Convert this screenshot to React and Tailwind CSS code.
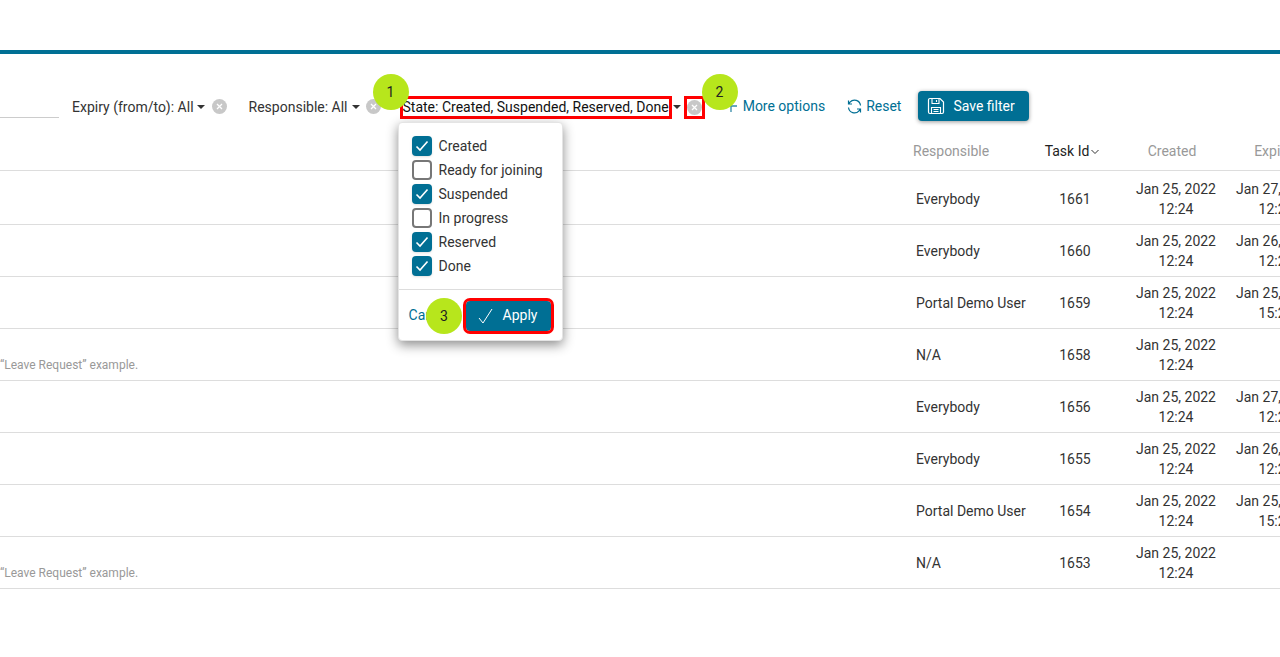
import React from "react";

const rows = [
  { r: "Everybody", id: "1661", e: ["Jan 27, 2022", "12:24"], h: "h-[54px] pt-[3px]" },
  { r: "Everybody", id: "1660", e: ["Jan 26, 2022", "12:24"] },
  { r: "Portal Demo User", id: "1659", e: ["Jan 25, 2022", "15:24"] },
  { r: "N/A", id: "1658", note: true },
  { r: "Everybody", id: "1656", e: ["Jan 27, 2022", "12:24"] },
  { r: "Everybody", id: "1655", e: ["Jan 26, 2022", "12:24"] },
  { r: "Portal Demo User", id: "1654", e: ["Jan 25, 2022", "15:24"] },
  { r: "N/A", id: "1653", note: true },
];

const states = [
  ["Created", true],
  ["Ready for joining", false],
  ["Suspended", true],
  ["In progress", false],
  ["Reserved", true],
  ["Done", true],
];

function Caret() {
  return (
    <svg width="8" height="4" viewBox="0 0 8 4" className="shrink-0">
      <path d="M0 0h8L4 4z" fill="#333" />
    </svg>
  );
}

function Clear() {
  return (
    <svg width="15" height="15" viewBox="0 0 15 15" className="shrink-0">
      <circle cx="7.5" cy="7.5" r="7.5" fill="#c8c8c8" />
      <path d="M5 5l5 5M10 5l-5 5" stroke="#fff" strokeWidth="1.3" />
    </svg>
  );
}

function Badge({ n, className }) {
  return (
    <div className={"absolute z-20 flex h-9 w-9 items-center justify-center rounded-full bg-[#b7e61c] text-sm text-[#222] " + className}>
      {n}
    </div>
  );
}

function Check({ on }) {
  if (on) {
    return (
      <span className="flex h-5 w-5 shrink-0 items-center justify-center rounded-sm bg-[#006f94] shadow-sm">
        <svg width="14" height="12" viewBox="0 0 14 12">
          <path d="M1.5 6.5l3.5 3.5 7.5-8.5" fill="none" stroke="#fff" strokeWidth="1.6" />
        </svg>
      </span>
    );
  }
  return <span className="h-5 w-5 shrink-0 rounded-sm border-2 border-[#777] bg-white" />;
}

export default function App() {
  return (
    <div className="h-[657px] w-[1280px] overflow-hidden bg-white font-['Roboto',sans-serif] text-sm leading-[17px] text-[#333]">
      <div className="mt-[50px] h-[4px] bg-[#006f94]" />

      <div className="flex h-[77px] items-center pt-[29px]">
        <div className="mt-[20px] h-px w-[59px] bg-[#ccc]" />
        <span className="ml-[13px] whitespace-nowrap">Expiry (from/to): All</span>
        <span className="ml-[3px]"><Caret /></span>
        <span className="ml-[7px] -mt-[2px]"><Clear /></span>
        <span className="ml-[22px] whitespace-nowrap">Responsible: All</span>
        <span className="ml-[4px]"><Caret /></span>
        <span className="ml-[6px] -mt-[2px]"><Clear /></span>

        <div className="relative ml-[22px] flex items-center">
          <span className="whitespace-nowrap text-[#111] outline-[3px] outline-[#f00]">State: Created, Suspended, Reserved, Done</span>
          <span className="ml-[4px]"><Caret /></span>
          <span className="ml-[6px] flex h-[17px] w-[15px] items-center justify-center outline-[3px] outline-[#f00]"><Clear /></span>

          <Badge n="1" className="left-[-30px] top-[-25px]" />
          <Badge n="2" className="left-[299px] top-[-25px]" />

          <div className="absolute left-[-5px] top-[23px] z-10 w-[165px] rounded-sm border border-[#e4e4e4] bg-white shadow-[0_4px_12px_rgba(0,0,0,0.45)]">
            <div className="flex flex-col gap-1 px-[13px] pb-[13px] pt-[13px]">
              {states.map(([label, on]) => (
                <label key={label} className="flex h-5 items-center gap-[7px] whitespace-nowrap">
                  <Check on={on} />
                  <span className="mt-[2px]">{label}</span>
                </label>
              ))}
            </div>
            <div className="flex h-[51px] items-center justify-between border-t border-[#ddd] pl-[10px] pr-[11px] pt-[2px]">
              <span className="text-[#006f94]">Cancel</span>
              <button className="flex h-[30px] w-[85px] items-center rounded-sm bg-[#006f94] pl-[12px] text-white outline-[3px] outline-[#f00]">
                <svg width="15" height="16" viewBox="0 0 15 16" className="shrink-0">
                  <path d="M1 10l4 5L14 1" fill="none" stroke="#fff" strokeWidth="1" />
                </svg>
                <span className="ml-[10px]">Apply</span>
              </button>
            </div>
            <Badge n="3" className="left-[27px] top-[175px] pl-[1px]" />
          </div>
        </div>

        <svg width="14" height="14" viewBox="0 0 14 14" className="ml-[22px] -mt-[2px] shrink-0">
          <path d="M7 1v12M1 7h12" stroke="#006f94" strokeWidth="1.3" opacity="0.8" />
        </svg>
        <span className="ml-[5px] -mt-[2px] whitespace-nowrap text-[#006f94]">More options</span>
        <svg width="15" height="15" viewBox="0 0 15 15" className="ml-[22px] -mt-[2px] shrink-0">
          <path d="M13.5 6.5A6 6 0 0 0 3 3.2L1.5 5M1.5 8.5A6 6 0 0 0 12 11.8L13.5 10M1.5 1.5V5H5M13.5 13.5V10H10" fill="none" stroke="#006f94" strokeWidth="1.2" />
        </svg>
        <span className="ml-[4px] -mt-[2px] whitespace-nowrap text-[#006f94]">Reset</span>
        <button className="ml-[17px] -mt-[3px] flex h-[30px] w-[111px] items-center rounded-sm bg-[#006f94] pl-[9px] text-white shadow-[0_1px_4px_rgba(0,0,0,0.4)]">
          <svg width="18" height="18" viewBox="0 0 18 18" className="shrink-0">
            <path d="M1.5 3a1.5 1.5 0 0 1 1.5-1.5h10l3.5 3.5v10a1.5 1.5 0 0 1-1.5 1.5H3A1.5 1.5 0 0 1 1.5 15z" fill="none" stroke="#fff" strokeWidth="1.2" />
            <path d="M5 1.5v5h7v-5M4.5 16.5v-6h9v6M6.5 12.5h5M6.5 14.5h5M9.5 3v2" fill="none" stroke="#fff" strokeWidth="1.1" />
          </svg>
          <span className="ml-[8px] mt-[2px] whitespace-nowrap">Save filter</span>
        </button>
      </div>

      <div className="flex h-[40px] w-[1320px] items-center border-b border-[#ddd] pt-[2px]">
        <div className="flex-1" />
        <div className="w-[113px] text-[#999]">Responsible</div>
        <div className="flex w-[92px] items-center justify-center text-[#222]">
          Task Id
          <svg width="8" height="5" viewBox="0 0 8 5" className="ml-[2px]">
            <path d="M.5 1l3.5 3.5L7.500 1" fill="none" stroke="#333" strokeWidth="1" />
          </svg>
        </div>
        <div className="w-[108px] text-center text-[#999]">Created</div>
        <div className="w-[94px] text-center text-[#999]">Expiry</div>
      </div>

      <div className="w-[1326px]">
        {rows.map((row) => (
          <div key={row.id} className={"relative flex items-center border-b border-[#ddd] " + (row.h || "h-[52px] pt-[2px]")}>
            <div className="flex-1">
              {row.note && (
                <span className="absolute bottom-[7px] left-0 text-xs text-[#999]">“Leave Request” example.</span>
              )}
            </div>
            <div className="w-[110px] whitespace-nowrap">{row.r}</div>
            <div className="w-[100px] pr-[2px] text-center">{row.id}</div>
            <div className="w-[100px] pb-[1px] text-center leading-5">Jan 25, 2022<br />12:24</div>
            <div className="w-[100px] pb-[1px] text-center leading-5">
              {row.e && (<>{row.e[0]}<br />{row.e[1]}</>)}
            </div>
          </div>
        ))}
      </div>
    </div>
  );
}
